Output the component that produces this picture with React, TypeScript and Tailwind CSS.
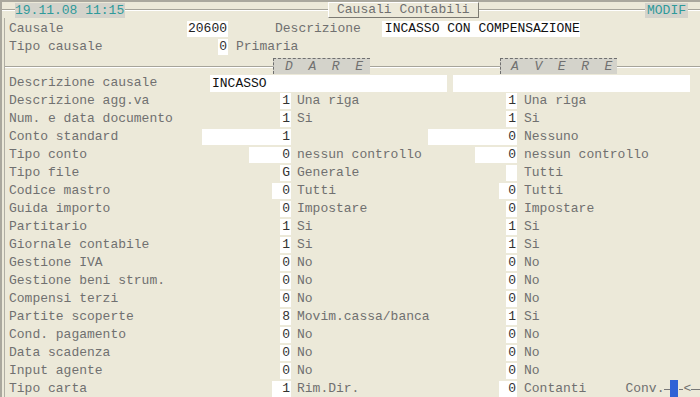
const S = "w-[11px]";

type RowData = [string, string, string, string, string, string, string];

const rows: RowData[] = [
  ["Descrizione agg.va", "1", S, "Una riga", "1", S, "Una riga"],
  ["Num. e data documento", "1", S, "Si", "1", S, "Si"],
  ["Conto standard", "1", "w-[89px]", "", "0", "w-[89px]", "Nessuno"],
  ["Tipo conto", "0", "w-[42px]", "nessun controllo", "0", "w-[42px]", "nessun controllo"],
  ["Tipo file", "G", S, "Generale", "", S, "Tutti"],
  ["Codice mastro", "0", "w-[19px]", "Tutti", "0", "w-[18px]", "Tutti"],
  ["Guida importo", "0", S, "Impostare", "0", S, "Impostare"],
  ["Partitario", "1", S, "Si", "1", S, "Si"],
  ["Giornale contabile", "1", S, "Si", "1", S, "Si"],
  ["Gestione IVA", "0", S, "No", "0", S, "No"],
  ["Gestione beni strum.", "0", S, "No", "0", S, "No"],
  ["Compensi terzi", "0", S, "No", "0", S, "No"],
  ["Partite scoperte", "8", S, "Movim.cassa/banca", "1", S, "Si"],
  ["Cond. pagamento", "0", S, "No", "0", S, "No"],
  ["Data scadenza", "0", S, "No", "0", S, "No"],
  ["Input agente", "0", S, "No", "0", S, "No"],
];

function Box({ w, children }: { w: string; children?: React.ReactNode }) {
  return (
    <div className={`${w} h-[16px] shrink-0 bg-white pr-[1px] text-right leading-[16px] text-[#333]`}>
      {children}
    </div>
  );
}

function Line({ w }: { w: string }) {
  return <div className={`${w} h-[2px] shrink-0 border-t border-b border-t-[#a6a49a] border-b-white`} />;
}

function Row({ r, extra }: { r: RowData; extra?: React.ReactNode }) {
  const [label, d, dw, dt, a, aw, at] = r;
  return (
    <div className="flex h-[18px] items-center">
      <div className="flex w-[286px] shrink-0 items-center justify-between pl-[4px]">
        <span>{label}</span>
        <Box w={dw}>{d}</Box>
      </div>
      <div className="flex w-[226px] shrink-0 items-center justify-between pl-[6px]">
        <span>{dt}</span>
        <Box w={aw}>{a}</Box>
      </div>
      <span className="whitespace-pre pl-[7px]">{at}</span>
      {extra}
    </div>
  );
}

export default function App() {
  return (
    <div className="h-[397px] w-[700px] overflow-hidden whitespace-nowrap border-t-2 border-l-2 border-[#aaa89e] bg-[#ece9d9] font-['Liberation_Mono',monospace] text-[13px] text-[#707070]">
      {/* Title bar */}
      <div className="flex h-[16px] items-center">
        <Line w="w-[13px]" />
        <div className="h-[15px] w-[110px] shrink-0 overflow-hidden bg-[#d4d3cb] leading-[15px] text-[#2f9a9a]">19.11.08 11:15</div>
        <Line w="w-[203px]" />
        <div className="h-[16px] w-[151px] shrink-0 border border-t-white border-l-white border-r-[#7c7a72] border-b-[#7c7a72] pl-[8px] leading-[14px]">
          Causali Contabili
        </div>
        <Line w="w-[166px]" />
        <div className="h-[15px] w-[43px] shrink-0 bg-[#d4d3cb] pl-[2px] leading-[15px] text-[#2f9a9a]">MODIF</div>
        <Line w="flex-1" />
      </div>

      {/* Body */}
      <div className="ml-[2px] h-[379px] border-l border-[#b0aea4] pt-[2px]">
        <div className="flex h-[18px] items-center pl-[4px]">
          <span className="w-[178px] shrink-0">Causale</span>
          <div className="h-[16px] w-[41px] shrink-0 bg-white pl-[1px] leading-[16px] text-[#222]">20600</div>
          <span className="ml-[47px]">Descrizione</span>
          <div className="ml-[21px] h-[16px] w-[198px] shrink-0 bg-white pl-[3px] leading-[16px] text-[#111]">
            INCASSO CON COMPENSAZIONE
          </div>
        </div>
        <div className="flex h-[18px] items-center pl-[4px]">
          <span className="w-[209px] shrink-0">Tipo causale</span>
          <Box w="w-[10px]">0</Box>
          <span className="ml-[8px]">Primaria</span>
        </div>

        {/* DARE / AVERE header */}
        <div className="flex h-[18px] items-end">
          <Line w="w-[268px] mb-[6px]" />
          <div className="h-[16px] w-[97px] shrink-0 whitespace-pre border-t border-l border-dashed border-[#6f6f6f] bg-[#d4d3cb] pl-[11px] italic leading-[15px]">
            D  A  R  E
          </div>
          <Line w="w-[130px] mb-[6px]" />
          <div className="h-[16px] w-[117px] shrink-0 whitespace-pre border-t border-l border-dashed border-[#6f6f6f] bg-[#d4d3cb] pl-[10px] italic leading-[15px]">
            A  V  E  R  E
          </div>
          <Line w="flex-1 mb-[6px]" />
        </div>

        <div className="flex h-[18px] items-center pl-[4px]">
          <span className="w-[201px] shrink-0">Descrizione causale</span>
          <div className="h-[17px] w-[237px] shrink-0 bg-white pl-[2px] leading-[17px] text-[#111]">INCASSO</div>
          <div className="ml-[6px] h-[17px] w-[237px] shrink-0 bg-white" />
        </div>

        {rows.map((r) => (
          <Row key={r[0]} r={r} />
        ))}

        <Row
          r={["Tipo carta", "1", "w-[19px]", "Rim.Dir.", "0", "w-[18px]", "Contanti"]}
          extra={
            <div className="ml-[39px] flex items-center">
              <span>Conv.</span>
              <div className="h-px w-[6px] bg-[#777]" />
              <div className="h-[18px] w-[8px] bg-[#2f62d6]" />
              <div className="ml-[1px] h-px w-[4px] bg-[#777]" />
              <span>&lt;</span>
              <div className="h-px w-[10px] bg-[#777]" />
            </div>
          }
        />
      </div>
    </div>
  );
}
